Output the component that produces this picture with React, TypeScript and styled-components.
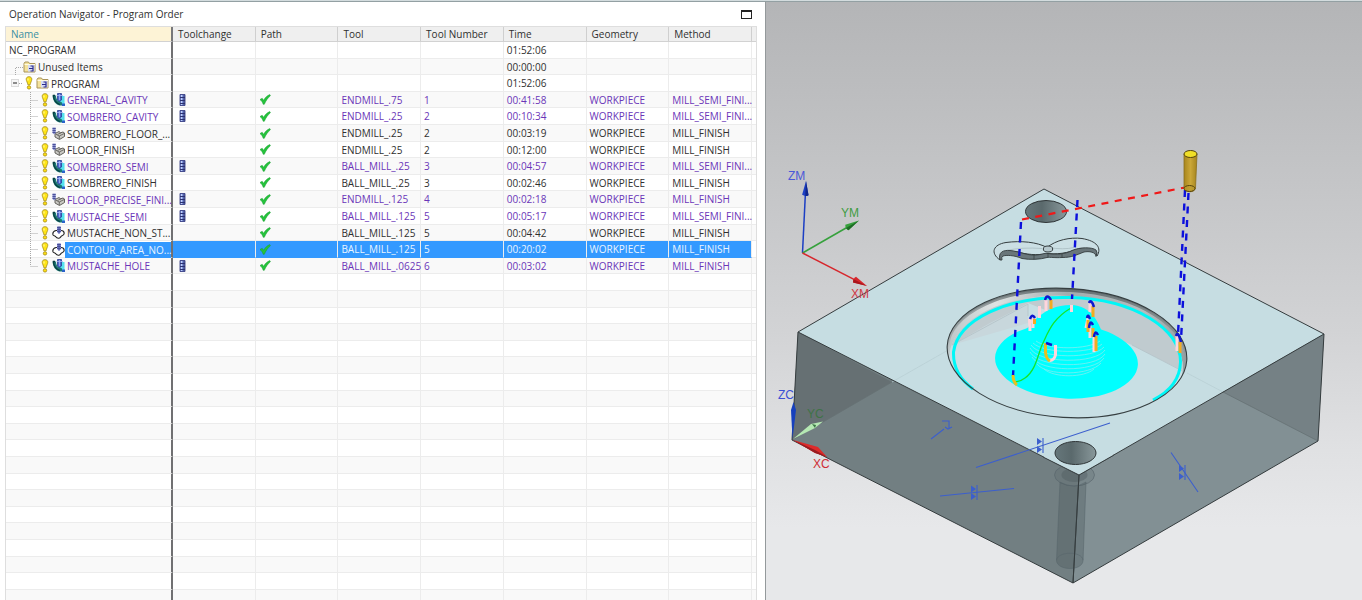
import React from "react";
import styled, { createGlobalStyle, css } from "styled-components";

const GlobalStyle = createGlobalStyle`
  *, *::before, *::after { box-sizing: border-box; }
  body {
    margin: 0;
    background: #ffffff;
    color: #303030;
    font-family: "Open Sans", "Noto Sans", sans-serif;
    font-size: 10px;
    line-height: 14px;
  }
`;

const Shell = styled.div`
  display: grid;
  grid-template-columns: minmax(0, 766fr) minmax(0, 596fr);
  height: 100vh;
  overflow: hidden;
  border-top: 1px solid #d3dcde;
`;

const Navigator = styled.section`
  display: flex;
  flex-direction: column;
  min-height: 0;
  overflow: hidden;
  padding: 0 8px 0 5px;
  border-top: 1px solid #93a0a3;
  border-right: 1px solid #94999b;
`;

const TitleBar = styled.header`
  display: flex;
  flex: none;
  align-items: center;
  justify-content: space-between;
  height: 24px;
  padding: 0 5px 0 4px;
`;

const Title = styled.h1`
  margin: 0;
  font-size: 10px;
  font-weight: 400;
`;

const MaximizeButton = styled.button`
  width: 11px;
  height: 9px;
  padding: 0;
  border: 1px solid #222;
  border-top-width: 2px;
  background: #fff;
`;

const TableFrame = styled.div`
  flex: 1;
  min-height: 0;
  overflow: hidden;
  border: 1px solid #dedede;
  border-bottom: 0;
`;

const Table = styled.table`
  width: 100%;
  table-layout: fixed;
  border-spacing: 0;
`;

const NameCol = styled.col`
  width: 167px;
`;

const EndCol = styled.col`
  width: 4px;
`;

const HeadCell = styled.th<{ $sorted?: boolean }>`
  height: 15px;
  padding: 0 0 0 5px;
  border-right: 1px solid #cfcfcf;
  border-bottom: 1px solid #d2d2d2;
  background: ${(p) => (p.$sorted ? "#fdf3d6" : "#efefef")};
  color: ${(p) => (p.$sorted ? "#3a8fa3" : "#303030")};
  font-weight: 400;
  line-height: 14px;
  text-align: left;
  white-space: nowrap;
  &:first-child { border-right: 2px solid #77777a; }
  &:last-child { padding: 0; border-right: 0; }
`;

const Cell = styled.td<{ $inset?: boolean }>`
  height: inherit;
  padding: 0 0 0 ${(p) => (p.$inset ? 6 : 3)}px;
  border-right: 1px solid #ececec;
  border-bottom: 1px solid #ececec;
  line-height: 14px;
  white-space: nowrap;
  &:first-child { padding: 0; border-right: 2px solid #707072; }
  &:last-child { padding: 0; border-right: 0; }
`;

const Row = styled.tr<{ $purple?: boolean; $selected?: boolean }>`
  height: 17px;
  color: ${(p) => (p.$purple ? "#6a35b8" : "#303030")};
  &:nth-child(5n + 2), &:nth-child(5n + 4) { height: 16px; }
  &:nth-child(even) { background: #f9f9f9; }
  ${(p) =>
    p.$selected &&
    css`
      color: #e8f4ff;
      ${Cell}:not(:first-child):not(:last-child) {
        background: #3399ff;
        border-bottom-color: #3399ff;
      }
    `}
`;

const NameContent = styled.div<{ $level: number }>`
  display: flex;
  align-items: center;
  height: 15px;
  padding-left: ${(p) => [3, 9, 5, 24][p.$level]}px;
`;

const Label = styled.span<{ $selected?: boolean }>`
  flex: 1;
  align-self: stretch;
  min-width: 0;
  padding: 1px 0 0 2px;
  background: ${(p) => (p.$selected ? "#3399ff" : "transparent")};
  box-shadow: ${(p) => (p.$selected ? "0 1px 0 #3399ff" : "none")};
  line-height: 14px;
`;

const RootLabel = styled.span`
  line-height: 14px;
`;

const ExpandButton = styled.button`
  display: flex;
  width: 8px;
  height: 8px;
  padding: 0;
  border: 1px solid #dcdcdc;
  background: #f6f6f6;
  svg { display: block; }
`;

const Icon = styled.svg`
  display: block;
  flex: none;
`;

const Guide = styled.svg`
  display: block;
  flex: none;
  overflow: visible;
  fill: none;
  stroke: #a8a8a8;
  stroke-dasharray: 1 1;
`;

const Viewport = styled.main`
  min-width: 0;
  min-height: 0;
  border-top: 1px solid #93a0a3;
  background: linear-gradient(#b4b5b7 0%, #c4c5c7 30%, #d2d3d5 55%, #e0e1e3 75%, #e7e8ea 88%, #e7e8ea 100%);
`;

const Scene = styled.svg`
  display: block;
  width: 100%;
  height: 100%;
  font-family: "Liberation Sans", Arial, sans-serif;
  font-size: 12px;
`;

const Alert = () => (
  <Icon width="8" height="14" viewBox="0 0 8 14">
    <path d="M4 .7C2.200.7 1.200 1.700 1.200 3.200 1.200 5 2.600 6.500 2.900 8.800h2.200C5.400 6.500 6.800 5 6.800 3.200 6.800 1.700 5.800.7 4 .7Z" fill="#ffe516" stroke="#a58c18" strokeWidth=".8" />
    <circle cx="4" cy="11.400" r="1.700" fill="#ffdf10" stroke="#a58c18" strokeWidth=".8" />
    <path d="M3 2.500v2" stroke="#fffbb8" />
  </Icon>
);

const Folder = () => (
  <Icon width="13" height="12" viewBox="0 0 13 12">
    <path d="M1 2.500V11h11V2.500H6.500L5.500 1h-3.500Z" fill="#f4e29b" stroke="#a8935a" />
    <path d="M1.500 3.500H12" stroke="#fffbe2" />
    <rect x="5" y="4" width="6.500" height="6.500" fill="#d5dcf4" />
    <path d="M10 4.500V10.500M10 5H7.500M10 7.500H6M10 10H7.500" fill="none" stroke="#2b2b8f" strokeWidth="1.200" />
  </Icon>
);

const MillIcon = () => (
  <Icon width="13" height="13" viewBox="0 0 13 13">
    <path d="M9 3h3.500v9H7V8Z" fill="#55e2ee" />
    <path d="M.5 2.500H4C4 6 5.500 8 8 8.500l2 1v3H7.500C3.500 11.500 1 8 .5 2.500Z" fill="#1d7a74" />
    <path d="M.8 2.500H3M1.500 3c.3 4.500 2.500 7 6.500 8.500" fill="none" stroke="#093f42" strokeWidth="1.300" />
    <path d="M5.500.5h4v6.500L7.500 8.500l-2-1.500Z" fill="#4c68cf" stroke="#2c3d94" strokeWidth=".8" />
    <path d="M7.500 1v6M4.500 2.500H11" stroke="#a9b9f6" strokeWidth=".8" />
    <path d="M10 10.500h3V13h-3Z" fill="#2a63ca" />
  </Icon>
);

const FloorIcon = () => (
  <Icon width="13" height="13" viewBox="0 0 13 13">
    <path d="M3 6.500 7 4.500l1.500 1.300L11 5l1.500 1v3.500L7.500 12.500 3 10Z" fill="#c9c8c3" stroke="#55544f" strokeWidth=".9" strokeLinejoin="round" />
    <path d="m3.500 7 3.700 2 5-2.500M7.300 9v3M5.500 7.500l4-2" fill="none" stroke="#55544f" strokeWidth=".8" />
    <path d="M.5.5h3.200V6l-1.500 1.500L.5 6Z" fill="#8990cf" />
    <path d="M.5 1.500h3.200M.5 3.500h3.200M.5 5.500h3.200" stroke="#454b94" strokeWidth=".9" />
  </Icon>
);

const ContourIcon = () => (
  <Icon width="13" height="13" viewBox="0 0 13 13">
    <path d="M4 4.500C2 5 .7 6.500.8 8.200 1 10 2.500 9.500 3.500 10.500c1 1.400 2.500 2 4 1.500 1.300-.5 1.200-1.800 2.500-2.300 1.500-.5 2.500-1.500 2-3C12 5.200 11 4.500 9 4.500Z" fill="#fff" stroke="#222" strokeWidth="1.100" />
    <path d="M5 .5h4V6L7 8 5 6Z" fill="#7f86cf" />
    <path d="M5 1.500h4M5 3.500h4M5 5.500h4M7 .5V7.500" stroke="#424993" strokeWidth=".8" />
  </Icon>
);

const ToolChange = () => (
  <Icon width="7" height="12" viewBox="0 0 7 12" aria-label="Tool change">
    <path d="M1 .5h5v11H1Z" fill="#8095dc" stroke="#3a4184" strokeWidth=".9" />
    <path d="M5 1v10M1 3.500h5M1 6.500h5M1 9.500h5" stroke="#2c3272" />
    <path d="M2.500 1v10" stroke="#c2cff8" strokeDasharray="2 1" />
  </Icon>
);

const Check = () => (
  <Icon width="12" height="11" viewBox="0 0 12 11" aria-label="Path generated">
    <path d="m1 5.500 2.200-1.200 1.400 2C6.300 3.500 8 1.700 10.800.6l.6 1.200C8.800 4 7 6.500 5.300 10.300H4.200C3.500 8.200 2.500 6.700 1 5.500Z" fill="#25c43c" stroke="#149a2c" strokeWidth=".5" />
  </Icon>
);

type Kind = "mill" | "floor" | "contour";
const opIcons = { mill: MillIcon, floor: FloorIcon, contour: ContourIcon };

interface Operation {
  name: string;
  kind: Kind;
  tool: string;
  num: number;
  time: string;
  method: string;
  purple?: boolean;
  change?: boolean;
  selected?: boolean;
}

const SEMI = "MILL_SEMI_FINI...";
const FINISH = "MILL_FINISH";

const operations: Operation[] = [
  { name: "GENERAL_CAVITY", kind: "mill", tool: "ENDMILL_.75", num: 1, time: "00:41:58", method: SEMI, purple: true, change: true },
  { name: "SOMBRERO_CAVITY", kind: "mill", tool: "ENDMILL_.25", num: 2, time: "00:10:34", method: SEMI, purple: true, change: true },
  { name: "SOMBRERO_FLOOR_...", kind: "floor", tool: "ENDMILL_.25", num: 2, time: "00:03:19", method: FINISH },
  { name: "FLOOR_FINISH", kind: "floor", tool: "ENDMILL_.25", num: 2, time: "00:12:00", method: FINISH },
  { name: "SOMBRERO_SEMI", kind: "mill", tool: "BALL_MILL_.25", num: 3, time: "00:04:57", method: SEMI, purple: true, change: true },
  { name: "SOMBRERO_FINISH", kind: "mill", tool: "BALL_MILL_.25", num: 3, time: "00:02:46", method: FINISH },
  { name: "FLOOR_PRECISE_FINI...", kind: "floor", tool: "ENDMILL_.125", num: 4, time: "00:02:18", method: FINISH, purple: true, change: true },
  { name: "MUSTACHE_SEMI", kind: "mill", tool: "BALL_MILL_.125", num: 5, time: "00:05:17", method: SEMI, purple: true, change: true },
  { name: "MUSTACHE_NON_ST...", kind: "contour", tool: "BALL_MILL_.125", num: 5, time: "00:04:42", method: FINISH },
  { name: "CONTOUR_AREA_NO...", kind: "contour", tool: "BALL_MILL_.125", num: 5, time: "00:20:02", method: FINISH, selected: true },
  { name: "MUSTACHE_HOLE", kind: "mill", tool: "BALL_MILL_.0625", num: 6, time: "00:03:02", method: FINISH, purple: true, change: true },
];

const columns = ["Toolchange", "Path", "Tool", "Tool Number", "Time", "Geometry", "Method"];
const EMPTY_ROWS = 20;

const Blank = ({ count }: { count: number }) => (
  <>
    {Array.from({ length: count }, (_, i) => (
      <Cell key={i} />
    ))}
  </>
);

const OperationRow = ({ op, last }: { op: Operation; last: boolean }) => {
  const OpIcon = opIcons[op.kind];
  return (
    <Row $purple={op.purple} $selected={op.selected}>
      <Cell>
        <NameContent $level={3}>
          <Guide width="11" height="16" viewBox="0 0 11 16">
            <path d={last ? "M.5 0v8M.5 8.500H8" : "M.5 0v17M.5 8.500H8"} />
          </Guide>
          <Alert />
          <Icon width="3" height="13" />
          <OpIcon />
          <Label $selected={op.selected}>{op.name}</Label>
        </NameContent>
      </Cell>
      <Cell $inset>{op.change && <ToolChange />}</Cell>
      <Cell><Check /></Cell>
      <Cell>{op.tool}</Cell>
      <Cell>{op.num}</Cell>
      <Cell>{op.time}</Cell>
      <Cell>WORKPIECE</Cell>
      <Cell>{op.method}</Cell>
      <Cell />
    </Row>
  );
};

const OperationTable = () => (
  <TableFrame>
    <Table>
      <colgroup>
        <NameCol />
        {columns.map((c) => <col key={c} />)}
        <EndCol />
      </colgroup>
      <thead>
        <tr>
          <HeadCell $sorted scope="col">Name</HeadCell>
          {columns.map((c) => <HeadCell key={c} scope="col">{c}</HeadCell>)}
          <HeadCell />
        </tr>
      </thead>
      <tbody>
        <Row>
          <Cell><NameContent $level={0}><RootLabel>NC_PROGRAM</RootLabel></NameContent></Cell>
          <Blank count={4} />
          <Cell>01:52:06</Cell>
          <Blank count={3} />
        </Row>
        <Row>
          <Cell>
            <NameContent $level={1}>
              <Guide width="8" height="15" viewBox="0 0 8 15"><path d="M.5 16V8.500H8" /></Guide>
              <Folder />
              <Label>Unused Items</Label>
            </NameContent>
          </Cell>
          <Blank count={4} />
          <Cell>00:00:00</Cell>
          <Blank count={3} />
        </Row>
        <Row>
          <Cell>
            <NameContent $level={2}>
              <ExpandButton aria-label="Collapse PROGRAM">
                <svg width="6" height="6"><path d="M1 3h4" stroke="#222" /></svg>
              </ExpandButton>
              <Guide width="6" height="15" viewBox="0 0 6 15"><path d="M0 7.500h4" /></Guide>
              <Alert />
              <Icon width="3" height="13" />
              <Folder />
              <Label>PROGRAM</Label>
            </NameContent>
          </Cell>
          <Blank count={4} />
          <Cell>01:52:06</Cell>
          <Blank count={3} />
        </Row>
        {operations.map((op, i) => (
          <OperationRow key={op.name} op={op} last={i === operations.length - 1} />
        ))}
        {Array.from({ length: EMPTY_ROWS }, (_, i) => (
          <Row key={i}><Blank count={9} /></Row>
        ))}
      </tbody>
    </Table>
  </TableFrame>
);

const Arrow = ({ x1, y1, x2, y2, color, dark }: { x1: number; y1: number; x2: number; y2: number; color: string; dark: string }) => {
  const len = Math.hypot(x2 - x1, y2 - y1);
  const deg = (Math.atan2(y2 - y1, x2 - x1) * 180) / Math.PI;
  return (
    <g transform={`translate(${x1} ${y1}) rotate(${deg})`}>
      <path d={`M0 0H${len - 13}`} stroke={color} strokeWidth="1.500" />
      <path d={`M${len} 0 ${len - 14}-3.200Q${len - 16} 0 ${len - 14} 3.200Z`} fill={color} />
      <path d={`M${len} 0 ${len - 14} 3.200Q${len - 15} 1.500 ${len - 15} 0Z`} fill={dark} />
    </g>
  );
};

const Block = () => (
  <g>
    <path d="M798 332 1044 189 1324 334 1079 475Z" fill="#c6dde2" />
    <path d="M798 332 1079 475 1073 583 792 440Z" fill="#727f82" />
    <path d="M798 332 892 382 792 440Z" fill="#667073" />
    <path d="M1079 475 1324 334 1318 441 1073 583Z" fill="#829094" />
    <path d="M1223 392 1324 334 1318 441Z" fill="#758185" />
    <path d="M792 440 892 382M1223 392 1318 441" stroke="#667174" strokeWidth=".8" />
    <path d="M892 382 950 349M1187 373 1223 392" stroke="#b9cfd4" strokeWidth=".8" />
    <path d="M798 332 1044 189 1324 334 1079 475ZM798 332 792 440 1073 583 1318 441 1324 334M1079 475 1073 583" fill="none" stroke="#353c3e" strokeLinejoin="round" />
  </g>
);

const Holes = () => (
  <g>
    <ellipse cx="1046" cy="211.500" rx="20.500" ry="11" fill="url(#hole)" stroke="#303638" />
    <ellipse cx="1074.500" cy="475" rx="20" ry="11" fill="#4e5b5e" fillOpacity=".18" stroke="#56646a" strokeOpacity=".6" />
    <ellipse cx="1074.500" cy="475" rx="13" ry="7" fill="#4e5b5e" fillOpacity=".4" />
    <path d="M1060 482 1056.500 561C1058 571 1082 571 1083 561L1086 482Q1074 490 1060 482Z" fill="#4b585b" fillOpacity=".35" stroke="#56646a" strokeOpacity=".5" />
    <path d="M1056.500 560C1058 551 1082 551 1083 560" fill="none" stroke="#56646a" strokeOpacity=".5" />
    <path d="M1043 457 1079 475 1114 455 1079 440Z" fill="#c6dde2" />
    <path d="M1043 457 1079 475 1114 455M1079 475 1073 583" fill="none" stroke="#353c3e" />
    <ellipse cx="1075.500" cy="453" rx="20.500" ry="11.500" fill="url(#hole)" stroke="#303638" />
  </g>
);

const Pocket = () => (
  <g>
    <g clipPath="url(#pocketClip)">
      <path d="M940 280h255v145H940Z" fill="url(#wall)" />
      <ellipse cx="1067" cy="355" rx="120" ry="64.500" transform="rotate(3.500 1067 355)" fill="none" stroke="url(#rim)" strokeWidth="3" />
      <ellipse cx="1067" cy="352" rx="119" ry="63.500" transform="rotate(3.500 1067 352)" fill="none" stroke="url(#rim)" strokeWidth="3" />
      <g clipPath="url(#floorClip)">
        <path d="M940 280h255v145H940Z" fill="#c8dfe4" />
        <path d="M940 280h255v97L1132 345 1028 303 940 352Z" fill="#c0cbcf" />
        <path d="M1028 304V323L952 345 990 323Z" fill="#c8d7dc" />
        <path d="M1028 304V316M1028 304 952 345M1132 345 1190 375" fill="none" stroke="#b4c2c6" strokeWidth=".8" />
      </g>
    </g>
    <path d="M973 389C959 379 953 367 953.500 352 958 320 1006 296 1070 297.500 1134 299 1181 329 1180.500 362 1180 379 1171 391 1153 400" fill="none" stroke="#00f7f7" strokeWidth="3" />
    <ellipse cx="1067" cy="353" rx="120" ry="64.500" transform="rotate(3.500 1067 353)" fill="none" stroke="#363f41" strokeWidth="1.100" />
  </g>
);

const Sombrero = () => (
  <g>
    <ellipse cx="1066.500" cy="361" rx="71.500" ry="37.500" transform="rotate(3 1066.500 361)" fill="#00ffff" />
    <path d="M1022 333C1031 327 1041 305 1071 305 1092 306 1098 322 1103 334L1112 350H1012Z" fill="#00ffff" />
    <g fill="none" stroke="#7feef0" strokeWidth=".8">
      <path d="M1036 341C1048 350 1088 350 1100 341" />
      <path d="M1033 343C1044 354 1092 354 1102 344" />
      <path d="M1031 345C1040 359 1094 359 1104 347" />
      <path d="M1030 348C1038 364 1096 364 1105 350" />
      <path d="M1030 352C1038 368 1096 369 1105 354" />
      <path d="M1032 357C1040 372 1094 373 1104 358" />
      <path d="M1037 364C1046 376 1090 376 1101 363" />
      <path d="M1044 369C1054 378 1084 378 1094 369" />
    </g>
    <path d="M1071 308C1052 319 1048 333 1042 345 1037 358 1035 371 1025 378Q1020 382 1014 382" fill="none" stroke="#14e62a" strokeWidth="1.300" />
  </g>
);

const Mustache = () => (
  <g stroke="#343c3e" strokeLinejoin="round">
    <path d="M1000 260C990 253 993 244.500 1006 242.500 1021 240.500 1037 242 1047 247.500 1056 240 1070 237 1082 238.500 1097 241 1102 248 1097 256 1097 250 1090 248 1080 248.500 1072 251 1062 255 1048 253.500 1038 256 1024 254 1018 252 1006 250 999 252 1000 260Z" fill="#cbdfe4" />
    <path d="M1048 247.500Q1064 250 1074 247.500M1006 250.500Q1022 247 1042 248.500" fill="none" stroke="#a9bcc1" strokeWidth=".8" />
    <path d="M1000 260C998 252 1003 250 1010 250.500 1020 251.500 1026 255.500 1036 255 1042 254.500 1044 253 1048 253.500 1056 255 1066 254 1072 250.500 1080 247 1092 247 1096 250Q1098 252 1096 256.500C1096 252 1089 251 1084 252 1076 255 1072 257.500 1062 257.500 1055 258 1050 257 1047 257.500 1040 259.500 1030 260 1022 258.500 1014 255 1006 255 1003 256Q1001 257 1002 260Z" fill="#69767a" strokeWidth=".9" />
    <ellipse cx="1048" cy="249" rx="4.700" ry="3" fill="#b7c9ce" />
    <path d="M1048 253.500v4M1034 255v4.500M1062 254v3.500" fill="none" strokeWidth=".7" />
  </g>
);

const RetractMarks = () => (
  <g fill="none" strokeWidth="3">
    <g stroke="#ffd5dc">
      <path d="M1046 300v11M1039.500 306v12M1029.500 319 1030 331M1033 318v10M1071.500 305v7M1090 303v9M1088 318l-2 10M1090 326v12M1094 336v16M1177 336v15" />
      <path d="M1055.500 345V355Q1054 361 1049 360.500" />
    </g>
    <g stroke="#f2ac22">
      <path d="M1051 300v9M1034.500 319v5M1093 306v11M1088 320v12M1096 336v15M1093 328v9M1180 342v11" />
      <path d="M1045.500 343v9Q1046 359 1050 361M1013 375Q1013 382 1017 385" stroke="#e8bf20" />
    </g>
    <g stroke="#0d17cf" strokeWidth="2.500">
      <path d="M1045 300Q1047 293 1051 300M1030 319Q1032 313 1035 318M1089 303Q1091 298 1094 307M1087 318Q1088 313 1090 319M1089 328Q1090 319 1093 325M1094 337Q1095 329 1098 335M1046 343 1052 345M1176 336Q1178 330 1181 342" />
    </g>
  </g>
);

const Toolpath = () => (
  <g fill="none">
    <g stroke="#0c10dc" strokeWidth="2.400" strokeDasharray="7 6.500">
      <path d="M1021 222 1013 376" />
      <path d="M1077.500 200 1072 299" />
      <path d="M1185 190 1178 335" />
      <path d="M1188.500 193 1181 340" />
    </g>
    <path d="M1022 219.500 1185 187.500" stroke="#f01818" strokeWidth="2.200" strokeDasharray="7 6.500" />
  </g>
);

const CuttingTool = () => (
  <g stroke="#55440c">
    <path d="M1184 154V188C1185 193 1195 193 1195.500 188L1197 154Z" fill="url(#tool)" stroke="#8b701c" strokeWidth=".8" />
    <ellipse cx="1190.500" cy="154" rx="6.500" ry="3.500" fill="#f0df28" />
    <ellipse cx="1189.500" cy="188.500" rx="5.500" ry="3" fill="#b99a2d" fillOpacity=".6" />
  </g>
);

const Constraints = () => (
  <g fill="none" stroke="#3c5fcd" strokeWidth="1.100">
    <path d="M976 467.500 1110 423M940 496 1014 488.500M1171 452.500 1198 492M931 439 944 429" />
    <path d="M1043 438v15M977 485v15M1185 465v15M942 421h7v8M945 427l3 2 4-2" />
    <g fill="#3c5fcd" stroke="none">
      <path d="M1037 438v7l5-3.500ZM1037 446v7l5-3.500Z" />
      <path d="M971 485.500v7l5-3.500ZM971 493v7l5-3.500Z" />
      <path d="M1179 465v7l5-3.500ZM1179 473v7l5-3.500Z" />
    </g>
  </g>
);

const Axes = () => (
  <g>
    <Arrow x1={802.5} y1={253} x2={806} y2={181} color="#1c3fc4" dark="#10268a" />
    <Arrow x1={802.5} y1={253} x2={859} y2={220.5} color="#36a13c" dark="#1d6b25" />
    <Arrow x1={802.5} y1={253} x2={867} y2={286} color="#d7262c" dark="#a9161c" />
    <text x="788" y="180" fill="#4a58d8">ZM</text>
    <text x="841" y="217" fill="#3f9c43">YM</text>
    <text x="851" y="298" fill="#cf3a45">XM</text>
    <path d="M792.500 439 791 410 793.500 402 796 410Z" fill="#1740bd" />
    <path d="M793 439 811 424 823 421.500 815 428Z" fill="#b5e8b3" />
    <path d="m812 424 4 1-1 3Z" fill="#397844" />
    <path d="M793 440 818 447 827 457 815 453Z" fill="#dc2a2a" />
    <path d="M793 440 815 453 827 457 815 450Z" fill="#981b20" />
    <text x="778" y="399" fill="#3b50d4">ZC</text>
    <text x="807" y="418" fill="#3f7346">YC</text>
    <text x="813" y="468" fill="#cf2e35">XC</text>
  </g>
);

const PartView = () => (
  <Viewport>
    <Scene viewBox="766 2 596 598" preserveAspectRatio="xMidYMid slice" role="img" aria-label="Part with tool path">
      <defs>
        <linearGradient id="hole">
          <stop offset="0" stopColor="#66777b" />
          <stop offset=".4" stopColor="#5a696c" />
          <stop offset="1" stopColor="#89989b" />
        </linearGradient>
        <linearGradient id="wall">
          <stop offset="0" stopColor="#b8c2c4" />
          <stop offset=".22" stopColor="#dfe3e3" />
          <stop offset=".5" stopColor="#a2acae" />
          <stop offset=".8" stopColor="#b4bdbf" />
          <stop offset="1" stopColor="#8f999b" />
        </linearGradient>
        <linearGradient id="rim" x1="0" y1="0" x2="0" y2="1">
          <stop offset="0" stopColor="#5c6668" stopOpacity=".8" />
          <stop offset=".3" stopColor="#7c8688" stopOpacity=".5" />
          <stop offset=".55" stopColor="#8f999b" stopOpacity="0" />
        </linearGradient>
        <linearGradient id="tool">
          <stop offset="0" stopColor="#a8861c" />
          <stop offset=".5" stopColor="#caa738" />
          <stop offset="1" stopColor="#a5841e" />
        </linearGradient>
        <clipPath id="pocketClip">
          <ellipse cx="1067" cy="353" rx="120" ry="64.500" transform="rotate(3.500 1067 353)" />
        </clipPath>
        <clipPath id="floorClip">
          <ellipse cx="1066" cy="363" rx="117" ry="67" transform="rotate(3.500 1066 363)" />
        </clipPath>
      </defs>
      <Block />
      <Holes />
      <Pocket />
      <Sombrero />
      <Mustache />
      <Constraints />
      <Toolpath />
      <RetractMarks />
      <CuttingTool />
      <Axes />
    </Scene>
  </Viewport>
);

export default function App() {
  return (
    <Shell>
      <GlobalStyle />
      <Navigator>
        <TitleBar>
          <Title>Operation Navigator - Program Order</Title>
          <MaximizeButton aria-label="Maximize" />
        </TitleBar>
        <OperationTable />
      </Navigator>
      <PartView />
    </Shell>
  );
}
